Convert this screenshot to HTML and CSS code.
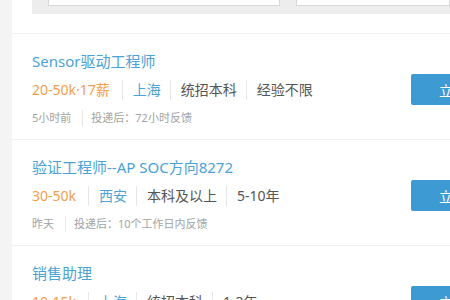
FILE: index.html
```html
<!DOCTYPE html>
<html lang="zh-CN">
<head>
<meta charset="utf-8">
<link rel="stylesheet" href="styles.css">
</head>
<body>
<div class="page">
  <div class="search">
    <div class="field field-main"></div>
    <div class="field field-side"></div>
  </div>
  <ul class="jobs">
    <li class="job">
      <div class="info">
        <div class="title">Sensor驱动工程师</div>
        <div class="tags">
          <span class="tag salary">20-50k·17薪</span>
          <span class="tag city">上海</span>
          <span class="tag">统招本科</span>
          <span class="tag">经验不限</span>
        </div>
        <div class="meta">
          <span class="meta-item">5小时前</span>
          <span class="meta-item">投递后：72小时反馈</span>
        </div>
      </div>
      <button class="apply">立即沟通</button>
    </li>
    <li class="job">
      <div class="info">
        <div class="title">验证工程师--AP SOC方向8272</div>
        <div class="tags">
          <span class="tag salary">30-50k</span>
          <span class="tag city">西安</span>
          <span class="tag">本科及以上</span>
          <span class="tag">5-10年</span>
        </div>
        <div class="meta">
          <span class="meta-item">昨天</span>
          <span class="meta-item">投递后：10个工作日内反馈</span>
        </div>
      </div>
      <button class="apply">立即沟通</button>
    </li>
    <li class="job">
      <div class="info">
        <div class="title">销售助理</div>
        <div class="tags">
          <span class="tag salary">10-15k</span>
          <span class="tag city">上海</span>
          <span class="tag">统招本科</span>
          <span class="tag">1-3年</span>
        </div>
        <div class="meta">
          <span class="meta-item">昨天</span>
          <span class="meta-item">投递后：72小时反馈</span>
        </div>
      </div>
      <button class="apply">立即沟通</button>
    </li>
  </ul>
</div>
</body>
</html>
```

FILE: styles.css
```css
* { box-sizing: border-box; }
html, body { margin: 0; padding: 0; }
body {
  background: #f4f4f4;
  font-family: "Noto Sans", "Noto Sans CJK SC", sans-serif;
  overflow: hidden;
  height: 300px;
}
.page {
  margin-left: 12px;
  background: #fff;
  min-height: 300px;
}
.search {
  margin-left: 20px;
  height: 14px;
  background: #ededed;
  display: flex;
  gap: 16px;
  padding: 0 0 8px 16px;
}
.field {
  height: 6px;
  background: #fff;
  border: 1px solid #d8d8d8;
  border-top: none;
}
.field-main { width: 232px; }
.field-side { flex: 1; }
.jobs {
  list-style: none;
  margin: 19px 0 0;
  padding: 0;
}
.job {
  display: flex;
  align-items: center;
  justify-content: space-between;
  border-top: 1px solid #f1f1f1;
  padding: 16px 0 13px 20px;
}
.info { display: flex; flex-direction: column; }
.title {
  font-size: 15px;
  line-height: 22px;
  color: #4ba2d6;
}
.tags {
  display: flex;
  margin-top: 8px;
  font-size: 14px;
  line-height: 20px;
  color: #555;
}
.tag {
  padding: 0 9px 0 10px;
  border-left: 1px solid #e6e6e6;
}
.tag:first-child { padding-left: 0; border-left: none; padding-right: 12px; }
.salary { color: #f2a04c; }
.city { color: #4ba2d6; }
.meta {
  display: flex;
  margin-top: 10px;
  font-size: 11px;
  line-height: 16px;
  color: #a3a3a3;
}
.meta-item {
  padding: 0 7px 0 8px;
  border-left: 1px solid #e6e6e6;
}
.meta-item:first-child { padding-left: 0; border-left: none; padding-right: 11px; }
.apply {
  width: 112px;
  height: 31px;
  margin-top: 3px;
  flex-shrink: 0;
  margin-right: -73px;
  border: none;
  border-radius: 2px;
  background: #3d9ad3;
  color: #fff;
  font-family: "Noto Sans CJK SC", sans-serif;
  font-size: 14px;
  padding: 0;
}
```
